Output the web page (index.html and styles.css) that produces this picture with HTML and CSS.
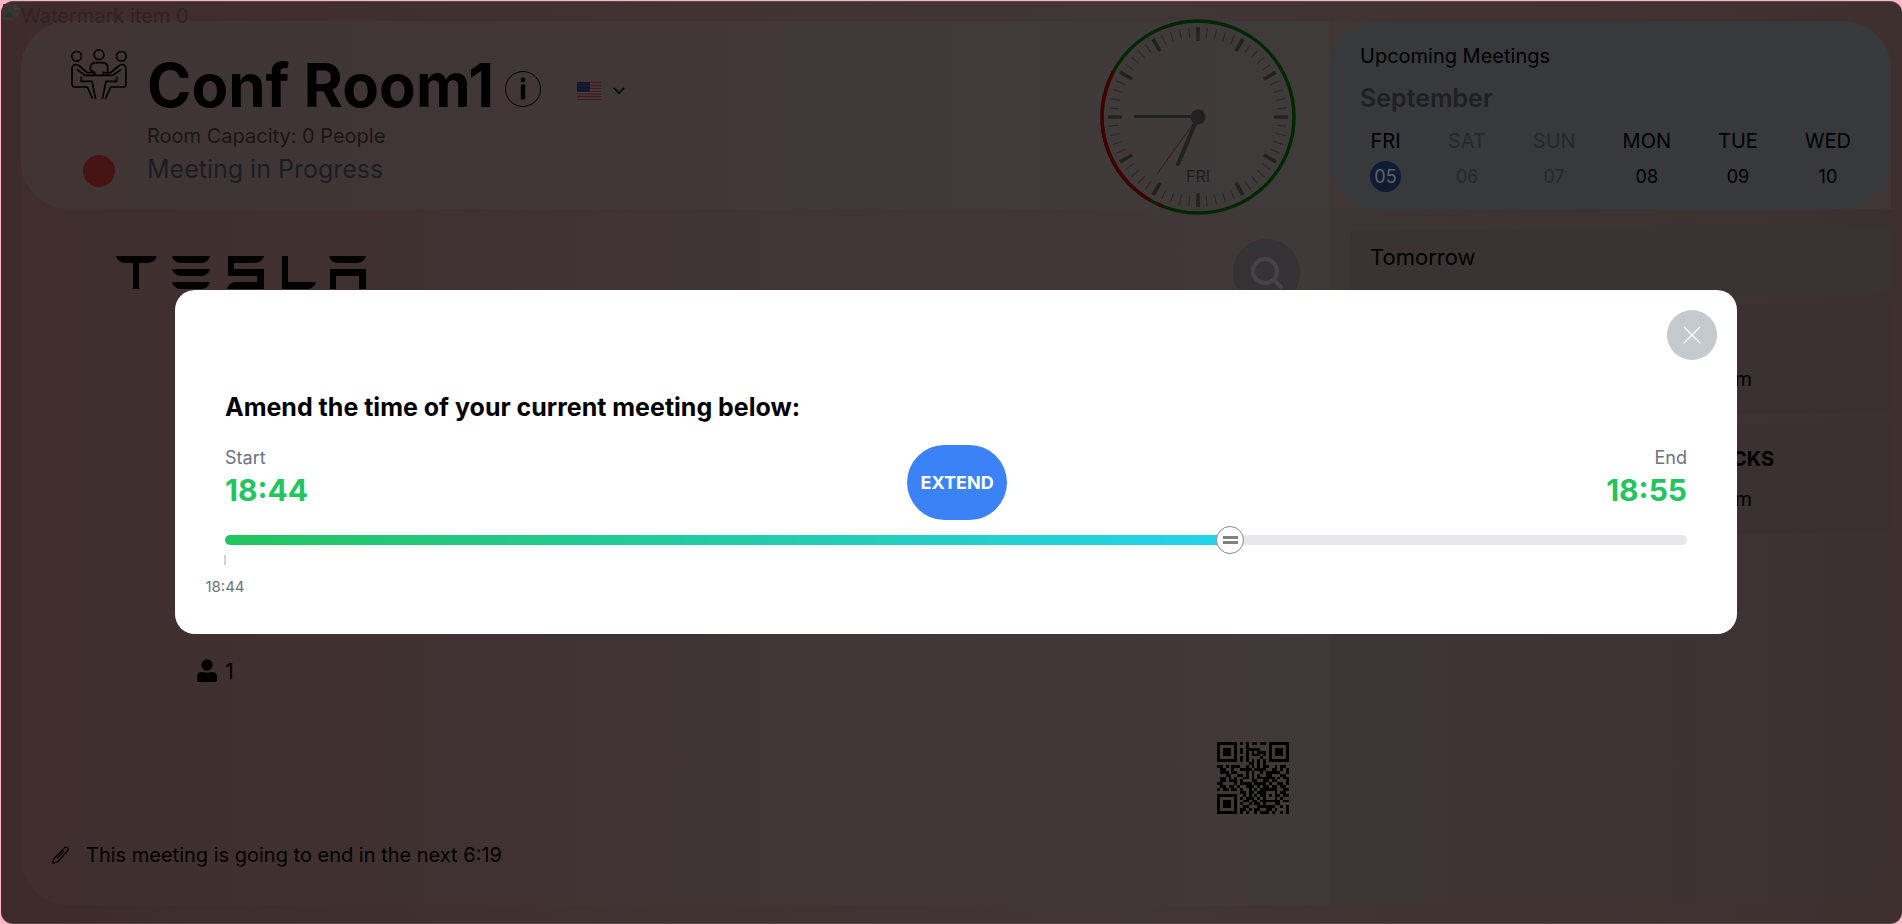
FILE: index.html
```html
<!DOCTYPE html>
<html lang="en">
<head>
<meta charset="utf-8">
<title>Conf Room1</title>
<link rel="stylesheet" href="styles.css">
</head>
<body>
<div class="frame">
  <div class="watermark">
    <svg width="19" height="18" viewBox="0 0 19 18" aria-hidden="true"><path d="M1 1h12l5 5v5l-6 6H1z" fill="#3b3434"/><path d="M2 14q4-9 10 0z" fill="#2b3325"/><path d="M13 1v5h5" fill="none" stroke="#4a4040"/></svg>
    <span>Watermark item 0</span>
  </div>
  <div class="panel">
    <main class="room">
      <header class="room-header">
        <div class="identity">
          <svg class="room-icon" width="56" height="50" viewBox="33 27 168 150" fill="none" stroke="#000" stroke-width="5" aria-hidden="true">
            <circle cx="50" cy="49" r="14.500"/><circle cx="117" cy="44" r="14.500"/><circle cx="184" cy="49" r="14.500"/>
            <path d="M91 89v-5q0-16 16-16h20q16 0 16 16v20"/>
            <path d="M91 86v3l10 8"/>
            <path d="M104 106V98H82L58 78Q50 71 42 75Q36 78 36 86V131Q36 141 46 141H82L98 177"/>
            <path d="M50 88L76 106H158L184 88"/>
            <path d="M130 106V98H152L176 78Q184 71 192 75Q198 78 198 86V131Q198 141 188 141H152L136 177"/>
            <path d="M64 110V124H96L107 177M170 110V124H138L127 177"/>
          </svg>
          <div class="title-row">
            <h1 class="room-name">Conf Room1</h1>
            <button class="info" type="button" aria-label="Room information">
              <svg width="38" height="38" viewBox="0 0 38 38" aria-hidden="true"><circle cx="19" cy="19" r="17.500" fill="none" stroke="#000" stroke-width="1"/><circle cx="19" cy="10" r="2.400"/><path d="M16.800 14.500h4.400v15h-4.400z"/></svg>
            </button>
            <button class="language" type="button" aria-label="Language: English (US)">
              <svg width="24" height="18" viewBox="0 0 24 18" aria-hidden="true"><rect width="24" height="18" rx="1" fill="#464142"/><path d="M0 .7h24M0 3.500h24M0 6.300h24M0 9.100h24M0 11.900h24M0 14.500h24M0 17.300h24" stroke="#42171f" stroke-width="1.300"/><rect width="13" height="10" fill="#11182b"/><path d="M1 2h12M2 4h11M1 6h12M2 8h11" stroke="#1f2536" stroke-width="1" stroke-dasharray="1 1.500"/></svg>
              <svg width="12" height="8" viewBox="0 0 12 8" aria-hidden="true"><path d="M1 1l5 5 5-5" fill="none" stroke="#000" stroke-width="1.600"/></svg>
            </button>
          </div>
          <p class="capacity">Room Capacity: 0 People</p>
          <span class="status-dot"></span>
          <p class="status">Meeting in Progress</p>
        </div>
        <svg class="clock" width="196" height="196" viewBox="-98 -98 196 196" role="img" aria-label="Clock">
          <circle r="96" fill="none" stroke="#002800" stroke-width="3.400"/>
          <path d="M-84.500-45.500A96 96 0 0 0-47.500 83.400M-41 86.800A96 96 0 0 0-35.500 89.200" fill="none" stroke="#420000" stroke-width="3.400"/>
          <circle r="84.500" fill="none" stroke="#292726" stroke-width="10" pathLength="360" stroke-dasharray=".7 5.300" stroke-dashoffset=".35"/>
          <circle r="83" fill="none" stroke="#212121" stroke-width="14" pathLength="360" stroke-dasharray="2.400 27.600" stroke-dashoffset="1.200"/>
          <text class="clock-day" x="0" y="65" text-anchor="middle">FRI</text>
          <path d="M0 0L-41 57M0 0L5-7" stroke="#421414" stroke-width="1"/>
          <path d="M0 0L-20 47" stroke="#212121" stroke-width="4" stroke-linecap="round"/>
          <path d="M0-.5H-64" stroke="#212121" stroke-width="3"/>
          <circle r="7.500" fill="#212121"/>
        </svg>
      </header>
      <section class="meeting">
        <div class="brand-row">
          <svg class="brand" width="251" height="33" viewBox="0 0 251 33" role="img" aria-label="Tesla" fill="none" stroke="#000">
            <path d="M0 0H41Q39 7 31 7H23V33H17V7H10Q2 7 0 0z" fill="#000" stroke="none"/>
            <path d="M56 0H94Q92 7 85 7H65Q58 7 56 0zM56 13H94Q92 20 85 20H65Q58 20 56 13zM56 26H94Q92 33 85 33H65Q58 33 56 26z" fill="#000" stroke="none"/>
            <path d="M112 0H148Q146 7 139 7H118V13H148V33H111Q113 26 120 26H141V20H112z" fill="#000" stroke="none"/>
            <path d="M166 0H172V26H200Q198 33 191 33H166z" fill="#000" stroke="none"/>
            <path d="M213 0H250Q248 7 241 7H222Q215 7 213 0zM214 13H250V33H243V20H220V33H214z" fill="#000" stroke="none"/>
          </svg>
          <button class="search" type="button" aria-label="Search">
            <svg width="34" height="34" viewBox="0 0 34 34" fill="none" stroke="#454444" stroke-width="4" stroke-linecap="round" aria-hidden="true"><circle cx="15" cy="15" r="12"/><path d="M24 24l7 7"/></svg>
          </button>
        </div>
        <p class="attendees">
          <svg width="20" height="24" viewBox="0 0 20 24" aria-hidden="true"><circle cx="10" cy="6" r="5.700"/><path d="M0 21v-3q0-5 5-5h1q4 1.500 8 0h1q5 0 5 5v3q0 2-2 2H2q-2 0-2-2z"/></svg>
          <span>1</span>
        </p>
        <svg class="qr" width="72" height="72" viewBox="0 0 25 25" shape-rendering="crispEdges" role="img" aria-label="QR code"></svg>
        <p class="notice">
          <svg width="18" height="18" viewBox="0 0 18 18" fill="none" stroke="#000" stroke-width="1.200" stroke-linejoin="round" aria-hidden="true"><path d="M.7 17.300l1.300-5L12.500 1.800q1.500-1.400 3 0 1.500 1.500 0 3L5.500 16zM12 5L5 12"/></svg>
          <span>This meeting is going to end in the next 6:19</span>
        </p>
      </section>
    </main>
    <aside class="schedule">
      <section class="upcoming">
        <h2 class="upcoming-title">Upcoming Meetings</h2>
        <p class="month">September</p>
        <ol class="days">
          <li class="day"><span>FRI</span><span class="date today">05</span></li>
          <li class="day muted"><span>SAT</span><span class="date">06</span></li>
          <li class="day muted"><span>SUN</span><span class="date">07</span></li>
          <li class="day"><span>MON</span><span class="date">08</span></li>
          <li class="day"><span>TUE</span><span class="date">09</span></li>
          <li class="day"><span>WED</span><span class="date">10</span></li>
        </ol>
      </section>
      <div class="agenda">
        <h3 class="card card-heading">Tomorrow</h3>
        <article class="card card-meeting"><p class="card-time">m</p></article>
        <article class="card card-meeting"><h4 class="card-name">CKS</h4><p class="card-time">m</p></article>
      </div>
    </aside>
  </div>
</div>

<div class="overlay">
  <section class="modal" role="dialog" aria-labelledby="amend-title">
    <button class="close" type="button" aria-label="Close">
      <svg width="18" height="18" viewBox="0 0 18 18" aria-hidden="true"><path d="M1 1l16 16M17 1L1 17" stroke="#fff" stroke-width="1.300"/></svg>
    </button>
    <h2 class="modal-title" id="amend-title">Amend the time of your current meeting below:</h2>
    <div class="times">
      <div class="time"><span class="time-label">Start</span><strong class="time-value">18:44</strong></div>
      <button class="extend" type="button">EXTEND</button>
      <div class="time time-end"><span class="time-label">End</span><strong class="time-value">18:55</strong></div>
    </div>
    <div class="track"><input class="slider" type="range" min="0" max="16" value="11" aria-label="Meeting end time"></div>
    <div class="scale"><span class="tick"></span><span class="tick-label">18:44</span></div>
  </section>
</div>
<script src="qr.js"></script>
</body>
</html>
```
FILE: styles.css
```css
* { box-sizing: border-box; }
body, h1, h2, h3, h4, p, ol { margin: 0; padding: 0; font-weight: 400; }
body {
  height: 100vh;
  padding: 1px 0 0 1px;
  overflow: hidden;
  background: #ffb6c8;
  color: #000;
  font: 20px/30px Inter, "Liberation Sans", sans-serif;
}
button { border: 0; padding: 0; background: none; color: inherit; font: inherit; }
svg { display: block; flex: none; }

.frame {
  position: relative;
  height: 100%;
  padding: 19px 11px 18px 20px;
  border: 1px solid #57474a;
  border-width: 1px 0;
  border-radius: 12px;
  background: linear-gradient(90deg, #3f2a2a 0%, #402e2e 15%, #403433 40%, #403635 60%, #403332 80%, #3f3030 100%);
}
.watermark {
  position: absolute;
  top: 1px;
  left: 1px;
  display: flex;
  line-height: 26px;
  color: #2f2322;
}
.panel {
  display: flex;
  height: 100%;
  border-radius: 48px;
  background: linear-gradient(90deg, #402e2e 0%, #403131 20%, #403636 42%, #3f3938 68%, #403533 100%);
}
.room { flex: 1; display: flex; flex-direction: column; min-width: 0; }
.room-header {
  display: flex;
  justify-content: space-between;
  align-items: flex-start;
  height: 188px;
  padding: 0 34px 0 50px;
  border-radius: 48px 0 0 48px;
  background: linear-gradient(90deg, #403434 0%, #403636 35%, #403939 60%, #3f3b3a 100%);
}
.identity {
  display: grid;
  grid-template-columns: 56px auto;
  column-gap: 20px;
  padding-top: 28px;
}
.title-row { display: flex; align-items: center; height: 72px; }
.room-name { font-size: 60px; line-height: 72px; font-weight: 700; }
.info { margin: 8px 0 0 10px; }
.language { display: flex; align-items: center; gap: 12px; margin: 12px 0 0 35px; }
.capacity { grid-column: 2; color: #191515; }
.status-dot { justify-self: center; align-self: end; width: 32px; height: 32px; border-radius: 50%; background: #471414; }
.status { font-size: 25px; line-height: 36px; color: #1a1d25; }
.clock { margin: -2px 0 -6px; position: relative; }
.clock-day { font-size: 16px; fill: #1d1b1b; }

.meeting { flex: 1; display: flex; flex-direction: column; padding: 30px 30px 35px 31px; }
.brand-row { display: flex; justify-content: space-between; padding-left: 64px; }
.brand { margin-top: 17px; }
.search {
  display: grid;
  place-items: center;
  width: 67px;
  height: 67px;
  border-radius: 50%;
  background: #343234;
}
.attendees { display: flex; align-items: center; gap: 8px; margin: auto 0 56px 145px; font-size: 22px; }
.qr { align-self: flex-end; margin: 0 11px 26px 0; }
.notice { display: flex; align-items: center; gap: 16px; }

.schedule {
  flex: 0 0 30%;
  display: flex;
  flex-direction: column;
  overflow: hidden;
  border-radius: 0 48px 48px 0;
  background: linear-gradient(90deg, #3c3635 0%, #3b3433 50%, #3c3131 100%);
}
.upcoming { height: 188px; padding: 20px 30px 0; border-radius: 48px; background: #38393c; box-shadow: 0 0 0 48px #403735; clip-path: inset(0); }
.upcoming-title { font-size: 20px; }
.month { margin-top: 9px; font-size: 25px; line-height: 36px; font-weight: 600; color: #1f2022; }
.days { display: flex; justify-content: space-between; padding: 0 10px; margin-top: 10px; list-style: none; }
.day { display: flex; flex-direction: column; align-items: center; gap: 5px; }
.date { width: 31px; height: 31px; line-height: 31px; text-align: center; font-size: 18px; border-radius: 50%; }
.today { background: #101c33; color: #606367; }
.muted { color: #27282a; }
.agenda { display: flex; flex-direction: column; gap: 10px; padding: 20px 0 0 20px; }
.card { border-radius: 8px; background: rgba(56, 48, 46, 0.4); }
.card-heading { height: 65px; padding: 13px 20px; font-size: 22px; background: #393332; }
.card-meeting { display: flex; flex-direction: column; justify-content: flex-end; gap: 10px; height: 110px; padding: 20px 0; text-align: right; }
.card-name { padding-right: 117px; font-size: 20px; font-weight: 700; }
.card-time { padding-right: 139px; }

.overlay { position: fixed; inset: 0; display: flex; align-items: center; padding: 0 165px 0 175px; }
.modal { position: relative; flex: 1; padding: 102px 50px 37px; border-radius: 20px; background: #fff; }
.close {
  position: absolute;
  top: 20px;
  right: 20px;
  display: grid;
  place-items: center;
  width: 50px;
  height: 50px;
  border-radius: 50%;
  background: #c5cacf;
}
.modal-title { font-size: 25px; font-weight: 700; }
.times { display: flex; justify-content: space-between; margin-top: 23px; }
.time { display: flex; flex-direction: column; }
.time-end { align-items: flex-end; }
.time-label { font-size: 18px; line-height: 26px; color: #6b7280; }
.time-value { font-size: 30px; line-height: 38px; font-weight: 700; color: #22c55e; }
.extend {
  width: 100px;
  height: 75px;
  border-radius: 38px;
  background: #3b82f6;
  color: #fff;
  font-size: 18px;
  font-weight: 700;
}
.track {
  display: flex;
  align-items: center;
  height: 10px;
  margin-top: 15px;
  border-radius: 5px;
  background: linear-gradient(90deg, #22c55e, #22d3ee) 0 0 / 68.75% 100% no-repeat #e5e7eb;
}
.slider {
  appearance: none;
  flex: none;
  width: calc(100% + 28px);
  height: 28px;
  margin: 0 -14px;
  background: transparent;
}
.slider::-webkit-slider-thumb {
  appearance: none;
  width: 28px;
  height: 28px;
  border: 1px solid #8c8c8c;
  border-radius: 50%;
  background:
    linear-gradient(#808080, #808080) 50% 9px / 15px 3px no-repeat,
    linear-gradient(#808080, #808080) 50% 14px / 15px 3px no-repeat,
    #fff;
}
.scale { display: flex; flex-direction: column; align-items: center; width: 40px; margin: 10px 0 0 -20px; }
.tick { width: 2px; height: 10px; background: #d1d5db; }
.tick-label { margin-top: 12px; font-size: 15px; line-height: 20px; color: #6b7280; }
```
FILE: qr.js
```js
const rows = [
  "1111111010101101101111111",
  "1000001000100000001000001",
  "1011101010111110001011101",
  "1011101010101011101011101",
  "1011101000101110101011101",
  "1000001010100001001000001",
  "1111111010101010101111111",
  "0000000000011010100000000",
  "1101011100101010110010110",
  "0110010011110111100110101",
  "0111011000101001011111001",
  "0001100110101010011000110",
  "0110101001101011111101011",
  "0110111010001100110110001",
  "1100001011110111101001101",
  "0110110100111010110110110",
  "1011011010010101111110011",
  "0000000011011011100010110",
  "1111111001010101101011011",
  "1000001010111010100010100",
  "1011101001101101111111011",
  "1011101010010110100011000",
  "1011101001100011111100101",
  "1000001011010110011010001",
  "1111111010100101110100101"
];

const path = document.createElementNS("http://www.w3.org/2000/svg", "path");
path.setAttribute("d", rows.map((row, y) =>
  [...row].map((cell, x) => cell === "1" ? `M${x} ${y}h1v1h-1z` : "").join("")).join(""));
document.querySelector(".qr").append(path);
```
